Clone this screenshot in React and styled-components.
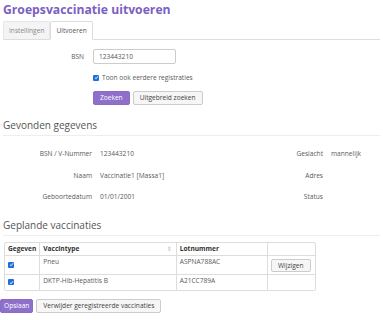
import React from "react";
import styled, { createGlobalStyle } from "styled-components";

const GlobalStyle = createGlobalStyle`
  body {
    margin: 0;
    background: #fff;
    font-family: "Open Sans", "DejaVu Sans", sans-serif;
    font-size: 6.6px;
    color: #5a5a5a;
  }
`;

const Page = styled.div`
  width: 383px;
  height: 320px;
  overflow: hidden;
  padding: 0 3px;
  box-sizing: border-box;
`;

const Title = styled.h1`
  margin: 0;
  padding-top: 1px;
  font-size: 12.2px;
  line-height: 18px;
  font-weight: 700;
  color: #7b60c2;
`;

const Tabs = styled.div`
  display: flex;
  margin-top: 2px;
  border-bottom: 1px solid #ddd;
`;

const Tab = styled.div`
  height: 17px;
  padding: 0 5px;
  display: flex;
  align-items: center;
  margin-bottom: -1px;
  border: 1px solid ${(p) => (p.$active ? "#ddd" : "#e6e6e6")};
  border-bottom-color: ${(p) => (p.$active ? "#fff" : "#ddd")};
  background: ${(p) => (p.$active ? "#fff" : "#f4f4f4")};
  color: ${(p) => (p.$active ? "#555" : "#888")};
  border-radius: 2px 2px 0 0;
`;

const Form = styled.div`
  display: grid;
  grid-template-columns: 81px auto;
  column-gap: 9px;
  row-gap: 9px;
  padding-top: 9px;
  align-items: center;
`;

const Label = styled.label`
  text-align: right;
  color: #5a5a5a;
`;

const Input = styled.div`
  height: 13px;
  width: 71px;
  border: 1px solid #ccc;
  border-radius: 2px;
  padding: 0 5px;
  display: flex;
  align-items: center;
  color: #555;
`;

const CheckRow = styled.div`
  display: flex;
  align-items: center;
  gap: 3px;
`;

const Check = styled.span`
  width: 6px;
  height: 6px;
  border-radius: 1px;
  background: #1e6fd9;
  display: inline-flex;
  align-items: center;
  justify-content: center;
  flex: none;
  svg {
    display: block;
  }
`;

const Buttons = styled.div`
  display: flex;
  gap: 3px;
`;

const Button = styled.button`
  font-family: inherit;
  font-size: 6.6px;
  height: 14px;
  padding: 0 ${(p) => (p.$pad ? p.$pad : 6)}px;
  border-radius: 2px;
  border: 1px solid ${(p) => (p.$primary ? "#8a6cc6" : "#ccc")};
  background: ${(p) => (p.$primary ? "#8e70ca" : "#f6f6f6")};
  color: ${(p) => (p.$primary ? "#fff" : "#444")};
  cursor: pointer;
  line-height: 12px;
`;

const SectionTitle = styled.h2`
  margin: ${(p) => p.$top}px 0 0;
  padding-bottom: 2px;
  font-size: 10px;
  line-height: 15px;
  font-weight: 400;
  color: #555;
  border-bottom: 1px solid #eee;
`;

const Details = styled.div`
  display: grid;
  grid-template-columns: 89px 1fr 60px 49px;
  column-gap: 8px;
  padding-top: 7px;
  grid-auto-rows: 21.5px;
  align-items: center;
`;

const Value = styled.span`
  color: #5a5a5a;
`;

const Table = styled.table`
  margin-top: 6px;
  border-collapse: separate;
  border-spacing: 0;
  width: 312px;
  border: 1px solid #ddd;
  border-radius: 2px;
  margin-left: 1px;
  th,
  td {
    border-right: 1px solid #ddd;
    border-bottom: 1px solid #ddd;
    padding: 0 3px;
    text-align: left;
    vertical-align: top;
  }
  th:last-child,
  td:last-child {
    border-right: none;
  }
  tr:last-child td {
    border-bottom: none;
  }
  th {
    height: 12px;
    line-height: 12px;
    font-weight: 700;
    color: #333;
  }
`;

const SortCell = styled.th`
  position: relative;
`;

const SortMark = styled.span`
  position: absolute;
  right: 4px;
  top: 0;
  color: #ccc;
  font-size: 6px;
`;

const Cell = styled.td`
  height: ${(p) => p.$h}px;
  line-height: 11px;
  color: #5a5a5a;
  vertical-align: ${(p) => (p.$mid ? "middle" : "top")} !important;
`;

const SmallButton = styled(Button)`
  margin-top: 3px;
  height: 13px;
  padding: 0 6px;
`;

const Footer = styled.div`
  display: flex;
  gap: 3px;
  margin: 8px 0 0 -3px;
`;

const Tick = () => (
  <Check>
    <svg width="5" height="5" viewBox="0 0 10 10">
      <path d="M2 5.5 L4.2 7.5 L8 2.5" stroke="#fff" strokeWidth="1.8" fill="none" />
    </svg>
  </Check>
);

const rows = [
  { type: "Pneu", lot: "ASPNA788AC", edit: true, h: 18 },
  { type: "DKTP-Hib-Hepatitis B", lot: "A21CC789A", edit: false, h: 15 },
];

export default function App() {
  return (
    <Page>
      <GlobalStyle />
      <Title>Groepsvaccinatie uitvoeren</Title>
      <Tabs>
        <Tab>Instellingen</Tab>
        <Tab $active>Uitvoeren</Tab>
      </Tabs>
      <Form>
        <Label>BSN</Label>
        <Input>123443210</Input>
        <span />
        <CheckRow>
          <Tick />
          <span>Toon ook eerdere registraties</span>
        </CheckRow>
        <span />
        <Buttons>
          <Button $primary>Zoeken</Button>
          <Button>Uitgebreid zoeken</Button>
        </Buttons>
      </Form>

      <SectionTitle $top={13}>Gevonden gegevens</SectionTitle>
      <Details>
        <Label>BSN / V-Nummer</Label>
        <Value>123443210</Value>
        <Label>Geslacht</Label>
        <Value>mannelijk</Value>
        <Label>Naam</Label>
        <Value>Vaccinatie1 [Massa1]</Value>
        <Label>Adres</Label>
        <Value />
        <Label>Geboortedatum</Label>
        <Value>01/01/2001</Value>
        <Label>Status</Label>
        <Value />
      </Details>

      <SectionTitle $top={10}>Geplande vaccinaties</SectionTitle>
      <Table>
        <colgroup>
          <col style={{ width: 34 }} />
          <col style={{ width: 138 }} />
          <col style={{ width: 92 }} />
          <col style={{ width: 47 }} />
        </colgroup>
        <thead>
          <tr>
            <th>Gegeven</th>
            <SortCell>
              Vaccintype
              <SortMark>⇕</SortMark>
            </SortCell>
            <th>Lotnummer</th>
            <th />
          </tr>
        </thead>
        <tbody>
          {rows.map((r) => (
            <tr key={r.lot}>
              <Cell $h={r.h} $mid>
                <Tick />
              </Cell>
              <Cell $h={r.h}>{r.type}</Cell>
              <Cell $h={r.h}>{r.lot}</Cell>
              <Cell $h={r.h}>{r.edit && <SmallButton>Wijzigen</SmallButton>}</Cell>
            </tr>
          ))}
        </tbody>
      </Table>
      <Footer>
        <Button $primary $pad={3}>Opslaan</Button>
        <Button>Verwijder geregistreerde vaccinaties</Button>
      </Footer>
    </Page>
  );
}
